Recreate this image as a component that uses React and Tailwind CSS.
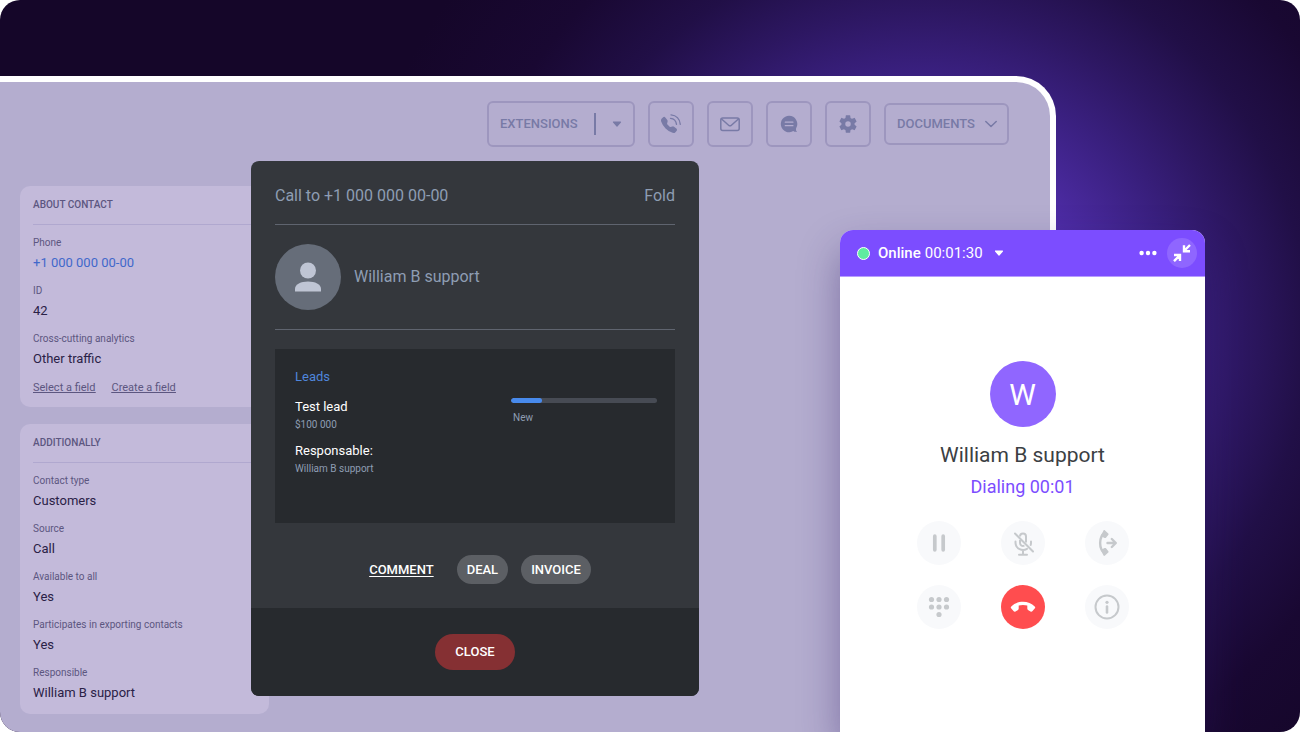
import React from "react";

const contactFields = [
  { label: "Phone", value: "+1 000 000 00-00", link: true },
  { label: "ID", value: "42" },
  { label: "Cross-cutting analytics", value: "Other traffic" },
];

const extraFields = [
  { label: "Contact type", value: "Customers" },
  { label: "Source", value: "Call" },
  { label: "Available to all", value: "Yes" },
  { label: "Participates in exporting contacts", value: "Yes" },
  { label: "Responsible", value: "William B support" },
];

function PhoneWavesIcon() {
  return (
    <svg viewBox="0 0 24 24" className="size-6" fill="none" aria-hidden="true">
      <path
        transform="translate(2 5)"
        fill="currentColor"
        d="M1.885.511a1.745 1.745 0 0 1 2.61.163L6.29 2.98c.329.423.445.974.315 1.494l-.547 2.19a.68.68 0 0 0 .178.643l2.457 2.457a.68.68 0 0 0 .644.178l2.189-.547a1.75 1.75 0 0 1 1.494.315l2.306 1.794c.829.645.905 1.87.163 2.611l-1.034 1.034c-.74.74-1.846 1.065-2.877.702a18.6 18.6 0 0 1-7.01-4.42 18.6 18.6 0 0 1-4.42-7.009c-.362-1.03-.037-2.137.703-2.877z"
      />
      <path
        d="M11.500 6.300c3.400.3 5.600 2.600 6 6M12 2.800c5.200.5 8.900 4.200 9.300 9.600"
        stroke="currentColor"
        strokeWidth="1.300"
        strokeLinecap="round"
      />
    </svg>
  );
}

function MailIcon() {
  return (
    <svg viewBox="0 0 24 24" className="size-6" fill="none" stroke="currentColor" strokeWidth="1.500" strokeLinejoin="round" aria-hidden="true">
      <rect x="2.800" y="6" width="18.400" height="12.600" rx="2" />
      <path d="M3.300 6.800 10.600 13.200a2.100 2.100 0 0 0 2.800 0L20.700 6.800" />
    </svg>
  );
}

function ChatIcon() {
  return (
    <svg viewBox="0 0 24 24" className="size-6" aria-hidden="true">
      <path fill="currentColor" d="M12 3.800a8.200 8.200 0 1 0 4.300 15.200c.8.700 2 1 3.600.8v-.6c-.8-.3-1.100-1.200-.8-3A8.200 8.200 0 0 0 12 3.800Z" />
      <path d="M8.300 10.200h7.600M8.300 13.700h7.600" stroke="#b4adcf" strokeWidth="1.300" strokeLinecap="round" />
    </svg>
  );
}

function GearIcon() {
  return (
    <svg viewBox="0 0 24 24" className="size-[22px]" fill="currentColor" aria-hidden="true">
      <path d="M19.140 12.940c.04-.3.060-.61.060-.94 0-.32-.02-.64-.07-.94l2.030-1.580a.49.49 0 0 0 .12-.61l-1.920-3.320a.488.488 0 0 0-.59-.22l-2.390.96c-.5-.38-1.030-.7-1.620-.94l-.36-2.540a.484.484 0 0 0-.48-.41h-3.840c-.24 0-.43.17-.47.41l-.36 2.540c-.59.24-1.130.57-1.620.94l-2.390-.96c-.22-.08-.47 0-.59.22L2.740 8.870c-.12.21-.08.47.12.61l2.030 1.580c-.05.3-.09.63-.09.94s.02.64.07.94l-2.030 1.580a.49.49 0 0 0-.12.61l1.920 3.320c.12.22.37.29.59.22l2.390-.96c.5.38 1.030.7 1.620.94l.36 2.540c.05.24.24.41.48.41h3.840c.24 0 .44-.17.47-.41l.36-2.540c.59-.24 1.130-.56 1.620-.94l2.390.96c.22.08.47 0 .59-.22l1.920-3.320c.12-.22.070-.47-.12-.61l-2.010-1.580ZM12 15a3 3 0 1 1 0-6 3 3 0 0 1 0 6Z" />
    </svg>
  );
}

function CaretIcon({ className }) {
  return (
    <svg viewBox="0 0 10 6" className={className} aria-hidden="true">
      <path d="M1.500 1h7L5 5Z" fill="currentColor" stroke="currentColor" strokeWidth="1.200" strokeLinejoin="round" />
    </svg>
  );
}

function ToolButton({ label, children }) {
  return (
    <button type="button" aria-label={label} className="flex size-[46px] items-center justify-center rounded-md border-2 border-[#9d96be]">
      {children}
    </button>
  );
}

function Toolbar() {
  return (
    <nav className="flex items-center justify-end gap-[13px] text-[13px] font-medium text-[#787aa6]">
      <div className="flex h-[46px] w-[148px] items-center rounded-md border-2 border-[#9d96be]">
        <button type="button" className="h-full pr-4 pl-[11px]">EXTENSIONS</button>
        <span className="h-[22px] w-[2px] bg-[#787aa6]" />
        <button type="button" aria-label="More extensions" className="flex h-full flex-1 items-center justify-center pl-[5px]">
          <CaretIcon className="h-[6px] w-[10px]" />
        </button>
      </div>
      <ToolButton label="Call"><PhoneWavesIcon /></ToolButton>
      <ToolButton label="Mail"><MailIcon /></ToolButton>
      <ToolButton label="Chat"><ChatIcon /></ToolButton>
      <ToolButton label="Settings"><GearIcon /></ToolButton>
      <button type="button" className="flex h-[42px] w-[125px] items-center justify-between rounded-md border-2 border-[#9d96be] pr-[10px] pl-[11px]">
        DOCUMENTS
        <svg viewBox="0 0 12 8" className="h-2 w-3" fill="none" stroke="currentColor" strokeWidth="1.500" strokeLinecap="round" strokeLinejoin="round" aria-hidden="true">
          <path d="M.8 1.500 6 6.500l5.200-5" />
        </svg>
      </button>
    </nav>
  );
}

function InfoCard({ title, fields, children }) {
  return (
    <section className="rounded-[10px] bg-[#c3bada] px-[13px] py-[11px] text-[#5c5680]">
      <h2 className="border-b border-[#b0a8cf] pb-[11px] text-[10px] leading-4 font-medium">{title}</h2>
      <dl className="flex flex-col gap-[10px] pt-[10px]">
        {fields.map((f) => (
          <div key={f.label}>
            <dt className="text-[10px] leading-4">{f.label}</dt>
            <dd className="mt-[2px] text-[13px] leading-5 text-[#2a2146]">
              {f.link ? <a href="#phone" className="text-[#4168cb]">{f.value}</a> : f.value}
            </dd>
          </div>
        ))}
      </dl>
      {children}
    </section>
  );
}

function CallDialog() {
  return (
    <div role="dialog" aria-label="Call" className="absolute top-[161px] left-[251px] w-[448px] overflow-hidden rounded-lg bg-[#34373c] text-[#8e9db3]">
      <div className="px-6">
        <header className="flex items-center justify-between border-b border-[#5f646f] pt-[25px] pb-[18px] text-[16px] leading-5">
          <h1>Call to +1 000 000 00-00</h1>
          <button type="button">Fold</button>
        </header>
        <div className="flex items-center gap-[13px] border-b border-[#5f646f] py-[19px] text-[16px]">
          <span className="flex size-[66px] items-center justify-center rounded-full bg-[#666d79]">
            <svg viewBox="0 0 26 30" className="h-[30px] w-[26px]" fill="#bfc5d4" aria-hidden="true">
              <circle cx="13" cy="8.500" r="8" />
              <path d="M0 29.500v-2.700C0 22.300 6 19.500 13 19.500s13 2.800 13 7.300v2.700Z" />
            </svg>
          </span>
          William B support
        </div>
        <section className="mt-[19px] flex h-[174px] justify-between bg-[#272a2e] py-[18px] pr-[18px] pl-5">
          <div className="text-[10px] leading-4">
            <h2 className="text-[13px] leading-5 text-[#4f86dc]">Leads</h2>
            <p className="mt-[10px] text-[13px] leading-5 text-white">Test lead</p>
            <p>$100 000</p>
            <p className="mt-2 text-[13px] leading-5 text-white">Responsable:</p>
            <p>William B support</p>
          </div>
          <div className="w-[146px] pt-[31px]">
            <div role="progressbar" aria-label="Lead stage" aria-valuenow={21} className="h-[5px] overflow-hidden rounded-full bg-[#474b54]">
              <div className="h-full w-[31px] rounded-full bg-[#488aec]" />
            </div>
            <p className="pt-[7px] pl-[2px] text-[10px] leading-4">New</p>
          </div>
        </section>
        <div className="flex justify-center gap-[13px] pt-8 pb-6 text-[13px] font-medium text-white">
          <button type="button" className="h-[29px] px-[10px] underline underline-offset-2">COMMENT</button>
          <button type="button" className="h-[29px] rounded-full bg-[#5c5f64] px-[10px]">DEAL</button>
          <button type="button" className="h-[29px] rounded-full bg-[#5c5f64] px-[10px]">INVOICE</button>
        </div>
      </div>
      <footer className="flex justify-center bg-[#272a2e] py-[26px]">
        <button type="button" className="h-9 w-20 rounded-full bg-[#853033] text-[13px] font-medium text-white">CLOSE</button>
      </footer>
    </div>
  );
}

function PadButton({ label, danger, children }) {
  return (
    <button
      type="button"
      aria-label={label}
      className={danger ? "flex size-11 items-center justify-center rounded-full bg-[#ff4d4f] text-white" : "flex size-11 items-center justify-center rounded-full bg-[#f8f9fb] text-[#c6c9cc]"}
    >
      <svg viewBox="0 0 28 28" className="size-7" fill="none" stroke="currentColor" strokeWidth="2" aria-hidden="true">
        {children}
      </svg>
    </button>
  );
}

function Softphone() {
  return (
    <aside className="absolute top-[230px] right-[95px] bottom-0 w-[365px] overflow-hidden rounded-t-[13px] bg-white shadow-[0_20px_40px_rgba(45,25,100,0.4)]">
      <header className="flex h-[47px] items-center border-b border-[#b79cff] bg-[#7c4dff] pr-2 pl-[17px] text-[15px] text-white">
        <span className="size-[13px] rounded-full border border-white bg-[#5feca0]" />
        <button type="button" className="ml-2 flex items-center">
          <span className="font-medium">Online</span>
          <span className="mr-[11px] ml-1">00:01:30</span>
          <CaretIcon className="h-[6px] w-[10px]" />
        </button>
        <button type="button" aria-label="More" className="ml-auto">
          <svg viewBox="0 0 18 6" className="h-[6px] w-[18px]" fill="currentColor" aria-hidden="true">
            <circle cx="2.600" cy="3" r="2.200" />
            <circle cx="9" cy="3" r="2.200" />
            <circle cx="15.400" cy="3" r="2.200" />
          </svg>
        </button>
        <button type="button" aria-label="Collapse" className="ml-[10px] flex size-[30px] items-center justify-center rounded-full bg-[#8f66ff]">
          <svg viewBox="0 0 18 18" className="size-[18px]" fill="none" stroke="currentColor" strokeWidth="2.400" aria-hidden="true">
            <path d="M17 1l-5.500 5.500M11 1.300v6h6M1 17.200l5.500-5.500M1 11h6v6" />
          </svg>
        </button>
      </header>
      <div className="flex flex-col items-center pt-[84px]">
        <span className="flex size-[66px] items-center justify-center rounded-full bg-[#9066ff] text-[30px] text-white">W</span>
        <h2 className="mt-4 text-[21px] leading-6 text-[#3b4043]">William B support</h2>
        <p className="mt-2 text-[18px] leading-6 text-[#7c4dff]">Dialing 00:01</p>
        <div className="mt-[22px] grid grid-cols-3 gap-x-10 gap-y-5">
          <PadButton label="Pause">
            <path d="M9.800 7.200v13.600M18.200 7.200v13.600" strokeWidth="3.700" strokeLinecap="round" />
          </PadButton>
          <PadButton label="Mute">
            <path d="M11 7.500c0-4 6-4 6 0v6M11 11v3c0 2.500 2.600 3.600 4.400 2.500" />
            <path d="M6.500 12.500v1.500a7.500 7.500 0 0 0 11.500 5.800M22 12.500v1.500c0 .8-.1 1.300-.3 2M14 21.500v4M10 25.800h8M6 4.500l18 18" strokeLinecap="round" />
          </PadButton>
          <PadButton label="Transfer">
            <path d="M12 3.500C5.500 8 5.500 20 12 24.500" strokeWidth="2.400" />
            <path d="M10.500 1.400c.5-.4 1-.4 1.500 0l3.300 3c.4.4.4.900.1 1.300l-2.400 3c-.4.500-1 .5-1.500.2L7.800 7ZM10.500 26.600c.5.4 1 .4 1.500 0l3.300-3c.4-.4.4-.900.1-1.300l-2.400-3c-.4-.5-1-.5-1.500-.2L7.800 21Z" fill="currentColor" stroke="none" />
            <path d="M14.500 14h8M18.800 10l4 4-4 4" strokeWidth="2.400" strokeLinecap="round" strokeLinejoin="round" />
          </PadButton>
          <PadButton label="Keypad">
            <g fill="currentColor" stroke="none">
              <circle cx="6.500" cy="6.500" r="2.600" />
              <circle cx="14" cy="6.500" r="2.600" />
              <circle cx="21.500" cy="6.500" r="2.600" />
              <circle cx="6.500" cy="14" r="2.600" />
              <circle cx="14" cy="14" r="2.600" />
              <circle cx="21.500" cy="14" r="2.600" />
              <circle cx="14" cy="21.500" r="2.600" />
            </g>
          </PadButton>
          <PadButton label="Hang up" danger>
            <path
              d="M14 8.700c-4.500 0-8.900 1.700-11.700 4.700-.6.700-.7 1.300-.2 1.900l2.600 3c.5.600 1.200.6 1.800.2l2.500-1.600c.5-.3.700-.7.700-1.300v-3.100c2.900-.7 5.700-.7 8.600 0v3.100c0 .6.2 1 .7 1.300l2.500 1.600c.6.4 1.300.4 1.800-.2l2.600-3c.5-.6.4-1.200-.2-1.900-2.800-3-7.200-4.700-11.700-4.700Z"
              fill="currentColor"
              stroke="none"
            />
          </PadButton>
          <PadButton label="Details">
            <circle cx="14" cy="14" r="11.500" />
            <path d="M14 13.500v6" strokeWidth="2.600" strokeLinecap="round" />
            <circle cx="14" cy="9.300" r="1.600" fill="currentColor" stroke="none" />
          </PadButton>
        </div>
      </div>
    </aside>
  );
}

export default function App() {
  return (
    <div className="min-h-screen bg-white font-['Roboto',sans-serif]">
      <div className="relative flex min-h-screen flex-col overflow-hidden rounded-[20px] bg-[radial-gradient(circle_at_71%_45%,#5732b8_120px,#4a2a9f_185px,#3a2080_255px,#2d1762_320px,#210f47_385px,#190832_470px,#150629_580px)] pt-[76px]">
        <main className="mr-[244px] flex-1 rounded-tr-[40px] border-t-[6px] border-r-[6px] border-white bg-[#b4adcf] pt-[19px] pr-[41px] pb-[18px] pl-5">
          <Toolbar />
          <div className="mt-[39px] flex w-[249px] flex-col gap-[17px]">
            <InfoCard title="ABOUT CONTACT" fields={contactFields}>
              <p className="mt-[11px] flex gap-4 text-[11px] leading-4 underline">
                <a href="#select">Select a field</a>
                <a href="#create">Create a field</a>
              </p>
            </InfoCard>
            <InfoCard title="ADDITIONALLY" fields={extraFields} />
          </div>
        </main>
        <CallDialog />
        <Softphone />
      </div>
    </div>
  );
}
